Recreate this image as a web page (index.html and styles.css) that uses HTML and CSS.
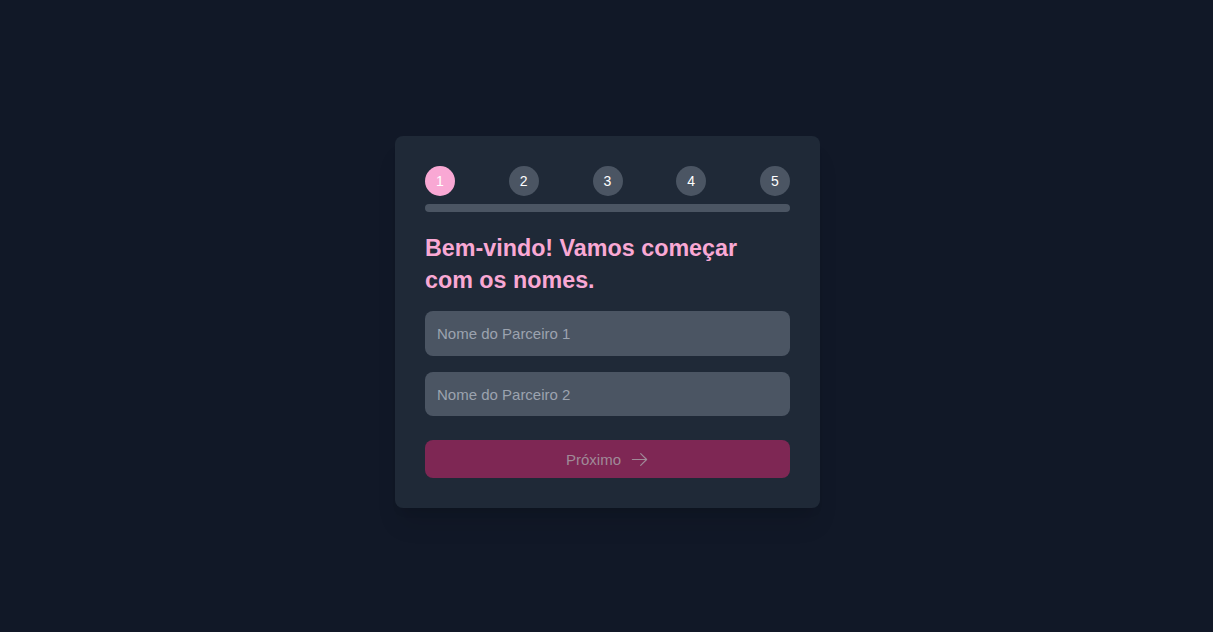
FILE: index.html
```html
<!DOCTYPE html>
<html lang="pt">
<head>
<meta charset="utf-8">
<title>Onboarding</title>
<link rel="stylesheet" href="styles.css">
</head>
<body>
<main class="page">
  <section class="card">
    <div class="steps">
      <span class="step active">1</span>
      <span class="step">2</span>
      <span class="step">3</span>
      <span class="step">4</span>
      <span class="step">5</span>
    </div>
    <div class="track"><div class="fill" style="width:0%"></div></div>
    <h1 class="title">Bem-vindo! Vamos começar com os nomes.</h1>
    <input class="field" type="text" placeholder="Nome do Parceiro 1">
    <input class="field" type="text" placeholder="Nome do Parceiro 2">
    <button class="next" type="button" disabled>
      <span>Próximo</span>
      <svg width="19" height="19" viewBox="0 0 24 24" fill="none" stroke="currentColor" stroke-width="1.5" stroke-linecap="round" stroke-linejoin="round"><path d="M13.5 4.5 21 12m0 0-7.5 7.5M21 12H3"/></svg>
    </button>
  </section>
</main>
</body>
</html>
```
FILE: styles.css
```css
* { box-sizing: border-box; }
html, body { margin: 0; padding: 0; }
body {
  background: #111827;
  font-family: "Liberation Sans", Arial, sans-serif;
  color: #fff;
}
.page {
  min-height: 632px;
  display: flex;
  align-items: center;
  justify-content: center;
  padding-top: 12px;
  padding-left: 2px;
}
.card {
  width: 425px;
  background: #1f2937;
  border-radius: 8px;
  padding: 30px;
  display: flex;
  flex-direction: column;
  box-shadow: 0 20px 25px -5px rgba(0,0,0,.1), 0 8px 10px -6px rgba(0,0,0,.1);
}
.steps {
  display: flex;
  justify-content: space-between;
}
.step {
  width: 30px;
  height: 30px;
  border-radius: 50%;
  background: #4b5563;
  color: #fff;
  font-size: 14px;
  display: flex;
  align-items: center;
  justify-content: center;
}
.step.active { background: #f9a8d4; }
.track {
  margin-top: 8px;
  height: 8px;
  border-radius: 4px;
  background: #4b5563;
  overflow: hidden;
}
.fill { height: 100%; background: #f9a8d4; }
.title {
  margin: 20px 0 15px;
  font-size: 23.3px;
  line-height: 32px;
  font-weight: 700;
  color: #f9a8d4;
  padding-right: 40px;
}
.field {
  height: 45px;
  border: 0;
  border-radius: 8px;
  background: #4b5563;
  color: #fff;
  font-family: inherit;
  font-size: 15px;
  padding: 0 12px;
  margin-bottom: 16px;
  outline: none;
}
.field + .field { height: 44px; }
.field::placeholder { color: #9ca3af; }
.next {
  margin-top: 8px;
  height: 38px;
  border: 0;
  border-radius: 8px;
  background: #7e2754;
  color: #a08a98;
  font-family: inherit;
  font-size: 15px;
  display: flex;
  align-items: center;
  justify-content: center;
  gap: 9px;
}
.next svg { display: block; }
```
